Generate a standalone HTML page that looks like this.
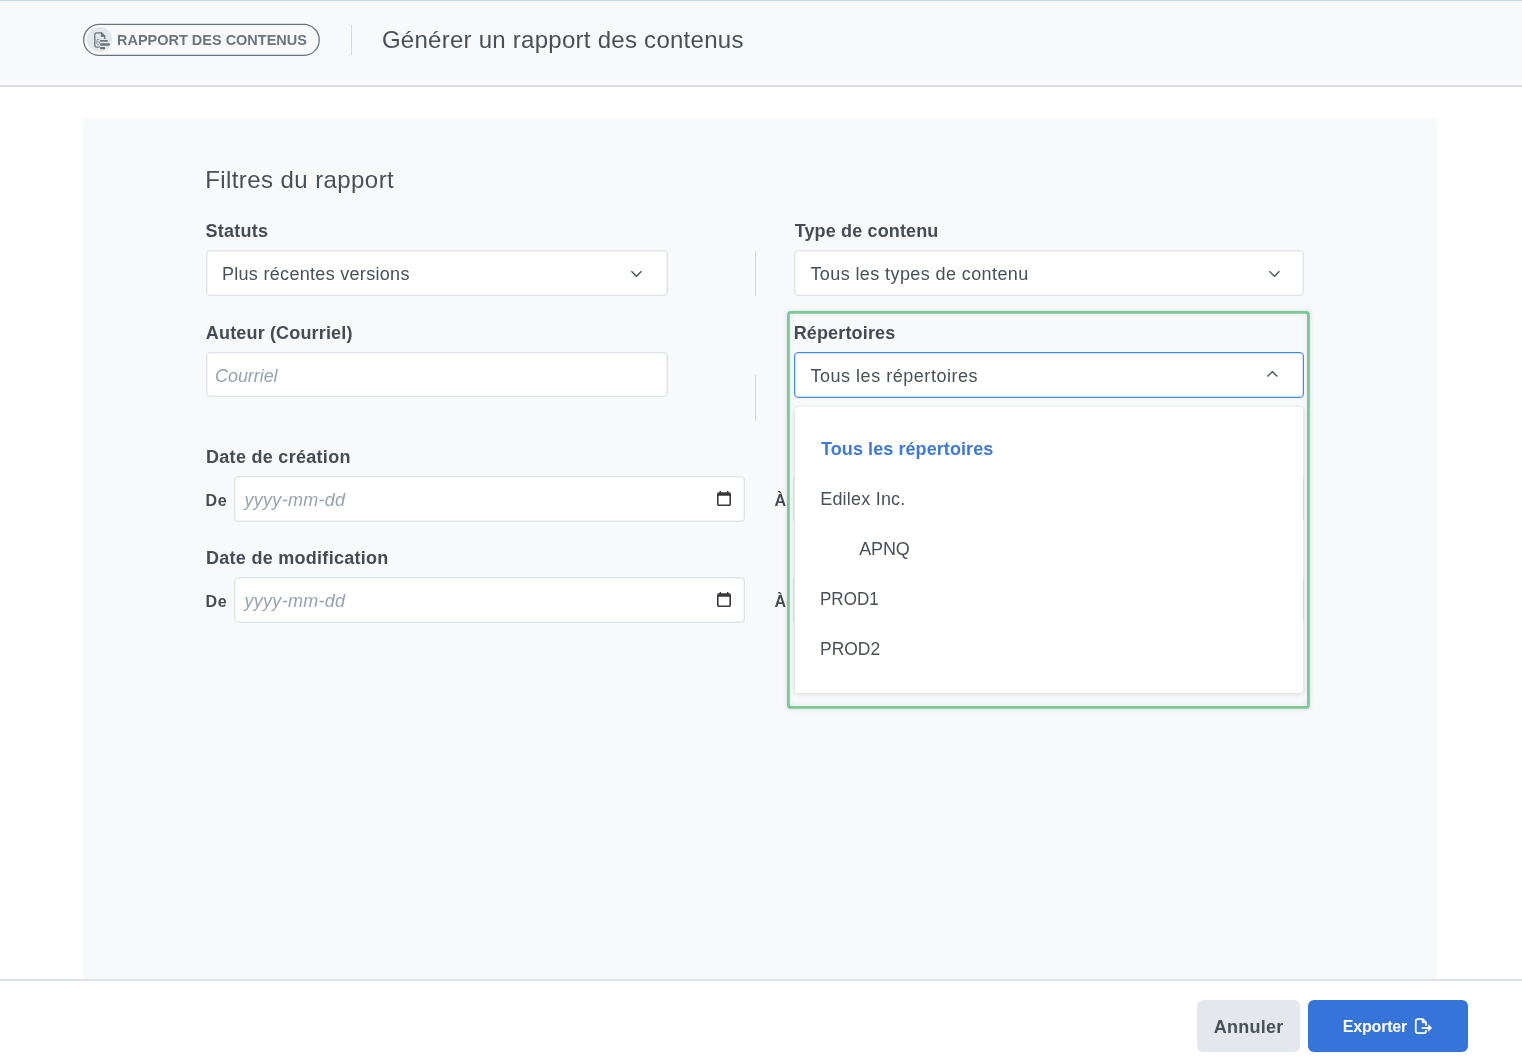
<!DOCTYPE html>
<html lang="fr">
<head>
<meta charset="utf-8">
<title>Générer un rapport des contenus</title>
<style>
*{box-sizing:border-box;margin:0;padding:0}
html,body{width:1522px;height:1058px;overflow:hidden;background:#fff}
body{font-family:"Liberation Sans",sans-serif;color:#495057;position:relative}
.abs{position:absolute}
.t{position:absolute;white-space:nowrap;line-height:1;transform-origin:0 50%}
svg{position:absolute;overflow:visible}
/* header */
#hdr{left:0;top:0;width:1522px;height:87px;background:#f8f9fb;border-bottom:2px solid #d8dde3}
#topline{left:0;top:0;width:1522px;height:1px;background:#c0d7f3}
#pill{left:83px;top:24px;width:237px;height:32px;border:1px solid #6c757d;border-radius:16px}
#pillc{left:87.2px;top:27.1px;width:25px;height:25px;border-radius:50%;background:#e4e7eb}
#hsep{left:350.5px;top:25px;width:1.5px;height:30px;background:#d5d9de}
/* panel */
#panel{left:83px;top:117.5px;width:1354px;height:880px;background:#f8f9fb;border-radius:5px}
.box{position:absolute;background:#fff;border:1px solid #e0e4e9;border-radius:4px;box-shadow:inset 0 0 0 1px rgba(224,228,233,.4)}
.vsep{position:absolute;width:1.5px;background:#d5d9de}
/* green highlight */
#green{left:787px;top:311px;width:523px;height:398px;border-radius:3px;box-shadow:0 0 5px rgba(0,0,0,.12), inset 0 0 8px rgba(0,0,0,.14)}
#sel2{border-color:#4288e8;box-shadow:inset 0 0 0 1px rgba(66,136,232,.22)}
#dd{left:795px;top:407px;width:508px;height:286px;background:#fff;border-radius:4px;box-shadow:0 1px 4px rgba(0,0,0,.16)}
/* footer */
#ftr{left:0;top:978.5px;width:1522px;height:80px;background:#fff;border-top:2px solid #dde1e6}
#bcan{left:1197px;top:1000px;width:103px;height:52px;background:#e4e7eb;border-radius:6px}
#bexp{left:1308px;top:1000px;width:160px;height:52px;background:#3574d9;border-radius:6px}
</style>
</head>
<body>
<div id="hdr" class="abs"></div>
<div id="topline" class="abs"></div>
<svg style="left:0;top:0" width="400" height="87"><rect x="83.65" y="24.4" width="235.6" height="31" rx="15.5" fill="none" stroke="#6c757d" stroke-width="1.3"/></svg>
<div id="pillc" class="abs"></div>
<!-- report icon -->
<svg style="left:88px;top:28px" width="24" height="24" viewBox="0 0 24 24" fill="none" stroke="#6c757d" stroke-width="1.3" stroke-linejoin="round" stroke-linecap="round">
  <path d="M11.6 19.2 H8.4 a1.6 1.6 0 0 1 -1.6 -1.6 V6.4 a1.6 1.6 0 0 1 1.6 -1.6 H13.4 L16.8 8.2 V11"/>
  <path d="M13.2 4.9 V8.4 H16.7 Z" fill="#6c757d" stroke-width="0.8"/>
  <rect x="8.9" y="11.6" width="2.4" height="5" rx="0.6" stroke-width="0.9" stroke="#8b939b" fill="#f1f3f5"/>
  <path d="M8.9 14.1 H11.3" stroke-width="0.8" stroke="#8b939b"/>
  <g stroke="#e4e7eb"><path d="M12.9 12.8 H19.1" stroke-width="3.2"/><path d="M13.25 16.6 H20.65" stroke-width="3.9"/><path d="M13.1 20.2 H16.1" stroke-width="3.6"/></g>
  <path d="M12.9 12.8 H19.1" stroke-width="1.8"/>
  <path d="M13.25 16.6 H20.65" stroke-width="2.5"/>
  <path d="M13.1 20.2 H16.1" stroke-width="2.2"/>
</svg>
<div id="hsep" class="abs"></div>

<div id="panel" class="abs"></div>

<div class="box" style="left:206px;top:250px;width:462px;height:46px"></div>
<div class="box" style="left:206px;top:352px;width:462px;height:45px"></div>
<div class="vsep" style="left:754.5px;top:251px;height:45px"></div>
<div class="vsep" style="left:754.5px;top:375px;height:46px"></div>
<div class="box" style="left:794px;top:250px;width:510px;height:46px"></div>

<div class="box" style="left:234px;top:476px;width:511px;height:46px"></div>
<div class="box" style="left:793px;top:476px;width:511px;height:46px"></div>
<div class="box" style="left:234px;top:577px;width:511px;height:46px"></div>
<div class="box" style="left:793px;top:577px;width:511px;height:46px"></div>

<!-- chevrons down -->
<svg style="left:630px;top:268px" width="13" height="11" viewBox="0 0 13 11" fill="none" stroke="#495057" stroke-width="1.35"><path d="M1.4 3.3 L6.4 8.2 L11.4 3.3"/></svg>
<svg style="left:1268px;top:268px" width="13" height="11" viewBox="0 0 13 11" fill="none" stroke="#495057" stroke-width="1.35"><path d="M1.4 3.3 L6.4 8.2 L11.4 3.3"/></svg>

<!-- calendar icons -->
<svg class="cal" style="left:716px;top:490px" width="16" height="17" viewBox="0 0 16 17"><path fill="#3b3b3b" fill-rule="evenodd" d="M3.6 0.9 h1.4 v1.4 h6 v-1.4 h1.4 v1.4 h1 a1.6 1.6 0 0 1 1.6 1.6 v10.4 a1.6 1.6 0 0 1 -1.6 1.6 h-10.8 a1.6 1.6 0 0 1 -1.6 -1.6 v-10.4 a1.6 1.6 0 0 1 1.6 -1.6 h1 z M2.6 5.8 v8.2 a0.4 0.4 0 0 0 0.4 0.4 h10 a0.4 0.4 0 0 0 0.4 -0.4 v-8.2 z"/></svg>
<svg class="cal" style="left:716px;top:591px" width="16" height="17" viewBox="0 0 16 17"><path fill="#3b3b3b" fill-rule="evenodd" d="M3.6 0.9 h1.4 v1.4 h6 v-1.4 h1.4 v1.4 h1 a1.6 1.6 0 0 1 1.6 1.6 v10.4 a1.6 1.6 0 0 1 -1.6 1.6 h-10.8 a1.6 1.6 0 0 1 -1.6 -1.6 v-10.4 a1.6 1.6 0 0 1 1.6 -1.6 h1 z M2.6 5.8 v8.2 a0.4 0.4 0 0 0 0.4 0.4 h10 a0.4 0.4 0 0 0 0.4 -0.4 v-8.2 z"/></svg>

<div id="green" class="abs"></div>
<svg style="left:0;top:0" width="1522" height="800"><rect x="788.4" y="312.4" width="520" height="395" rx="2.5" fill="none" stroke="#7bc897" stroke-width="2.8"/></svg>
<div id="sel2" class="box" style="left:794px;top:351.5px;width:510px;height:46px"></div>
<svg style="left:1266px;top:368px" width="13" height="11" viewBox="0 0 13 11" fill="none" stroke="#495057" stroke-width="1.35"><path d="M1.4 8.6 L6.4 3.7 L11.4 8.6"/></svg>
<div id="dd" class="abs"></div>

<div id="ftr" class="abs"></div>
<div id="bcan" class="abs"></div>
<div id="bexp" class="abs"></div>
<!-- export icon -->
<svg style="left:1413px;top:1016px" width="22" height="20" viewBox="0 0 22 20" fill="none" stroke="#fff" stroke-width="1.75" stroke-linejoin="round" stroke-linecap="round">
  <path d="M13 9 V6.3 L9.6 3 H4.8 a2 2 0 0 0 -2 2 V15 a2 2 0 0 0 2 2 H11 a2 2 0 0 0 2 -2 V14.6"/>
  <path d="M9.2 3.2 V6.7 H12.8 Z" fill="#fff" stroke-width="0.8"/>
  <path d="M8.6 12 H17" stroke-linecap="butt"/>
  <path d="M15.7 9.1 L18.7 12 L15.7 14.9 Z" fill="#fff" stroke-width="0.7"/>
</svg>

<div id="txt" style="position:absolute;left:0;top:0;width:1522px;height:1058px;will-change:transform">
<span id="pillt" class="t" style="left:117.47px;top:32.40px;font-size:15.5px;color:#6c757d;font-weight:bold;transform:scaleX(0.9343)">RAPPORT DES CONTENUS</span>
<span id="title" class="t" style="left:381.88px;top:28.20px;font-size:24px;color:#495057;letter-spacing:0.265px">Générer un rapport des contenus</span>
<span id="filt" class="t" style="left:205.21px;top:167.50px;font-size:24px;color:#495057;letter-spacing:0.418px">Filtres du rapport</span>
<span id="l1" class="t" style="left:205.49px;top:222.00px;font-size:18px;color:#454c53;font-weight:bold;letter-spacing:0.270px">Statuts</span>
<span id="v1" class="t" style="left:221.95px;top:265.00px;font-size:18px;color:#495057;letter-spacing:0.304px">Plus récentes versions</span>
<span id="l2" class="t" style="left:205.83px;top:324.25px;font-size:18px;color:#454c53;font-weight:bold;letter-spacing:0.162px">Auteur (Courriel)</span>
<span id="p1" class="t" style="left:215.06px;top:367.00px;font-size:18px;color:#98a2ad;font-style:italic;letter-spacing:-0.070px">Courriel</span>
<span id="l3" class="t" style="left:794.66px;top:222.00px;font-size:18px;color:#454c53;font-weight:bold;letter-spacing:0.142px">Type de contenu</span>
<span id="v2" class="t" style="left:810.43px;top:265.30px;font-size:18px;color:#495057;letter-spacing:0.403px">Tous les types de contenu</span>
<span id="l4" class="t" style="left:793.66px;top:323.75px;font-size:18px;color:#454c53;font-weight:bold;letter-spacing:0.152px">Répertoires</span>
<span id="v3" class="t" style="left:810.43px;top:366.75px;font-size:18px;color:#495057;letter-spacing:0.530px">Tous les répertoires</span>
<span id="i0" class="t" style="left:821.03px;top:439.50px;font-size:18px;color:#3d78db;font-weight:bold;letter-spacing:0.078px">Tous les répertoires</span>
<span id="i1" class="t" style="left:820.17px;top:490.00px;font-size:18px;color:#495057;letter-spacing:0.214px">Edilex Inc.</span>
<span id="i2" class="t" style="left:859.19px;top:540.00px;font-size:18px;color:#495057;letter-spacing:-0.149px">APNQ</span>
<span id="i3" class="t" style="left:820.35px;top:590.00px;font-size:18px;color:#495057;transform:scaleX(0.9457)">PROD1</span>
<span id="i4" class="t" style="left:819.88px;top:640.00px;font-size:18px;color:#495057;transform:scaleX(0.9710)">PROD2</span>
<span id="l5" class="t" style="left:206.03px;top:448.00px;font-size:18px;color:#454c53;font-weight:bold;letter-spacing:0.292px">Date de création</span>
<span id="d1" class="t" style="left:205.39px;top:492.50px;font-size:16px;color:#454c53;font-weight:bold;letter-spacing:0.857px">De</span>
<span id="p2" class="t" style="left:244.51px;top:490.50px;font-size:18px;color:#98a2ad;font-style:italic;letter-spacing:0.289px">yyyy-mm-dd</span>
<span id="a1" class="t" style="left:774.57px;top:492.50px;font-size:16px;color:#454c53;font-weight:bold">À</span>
<span id="l6" class="t" style="left:206.03px;top:549.25px;font-size:18px;color:#454c53;font-weight:bold;letter-spacing:0.277px">Date de modification</span>
<span id="d2" class="t" style="left:205.39px;top:593.75px;font-size:16px;color:#454c53;font-weight:bold;letter-spacing:0.857px">De</span>
<span id="p3" class="t" style="left:244.51px;top:591.50px;font-size:18px;color:#98a2ad;font-style:italic;letter-spacing:0.289px">yyyy-mm-dd</span>
<span id="a2" class="t" style="left:774.57px;top:593.50px;font-size:16px;color:#454c53;font-weight:bold">À</span>
<span id="bc" class="t" style="left:1213.64px;top:1017.90px;font-size:18px;color:#495057;font-weight:bold;letter-spacing:0.266px">Annuler</span>
<span id="be" class="t" style="left:1342.83px;top:1019.20px;font-size:16px;color:#fff;font-weight:bold;letter-spacing:-0.199px">Exporter</span>
</div>
</body>
</html>
